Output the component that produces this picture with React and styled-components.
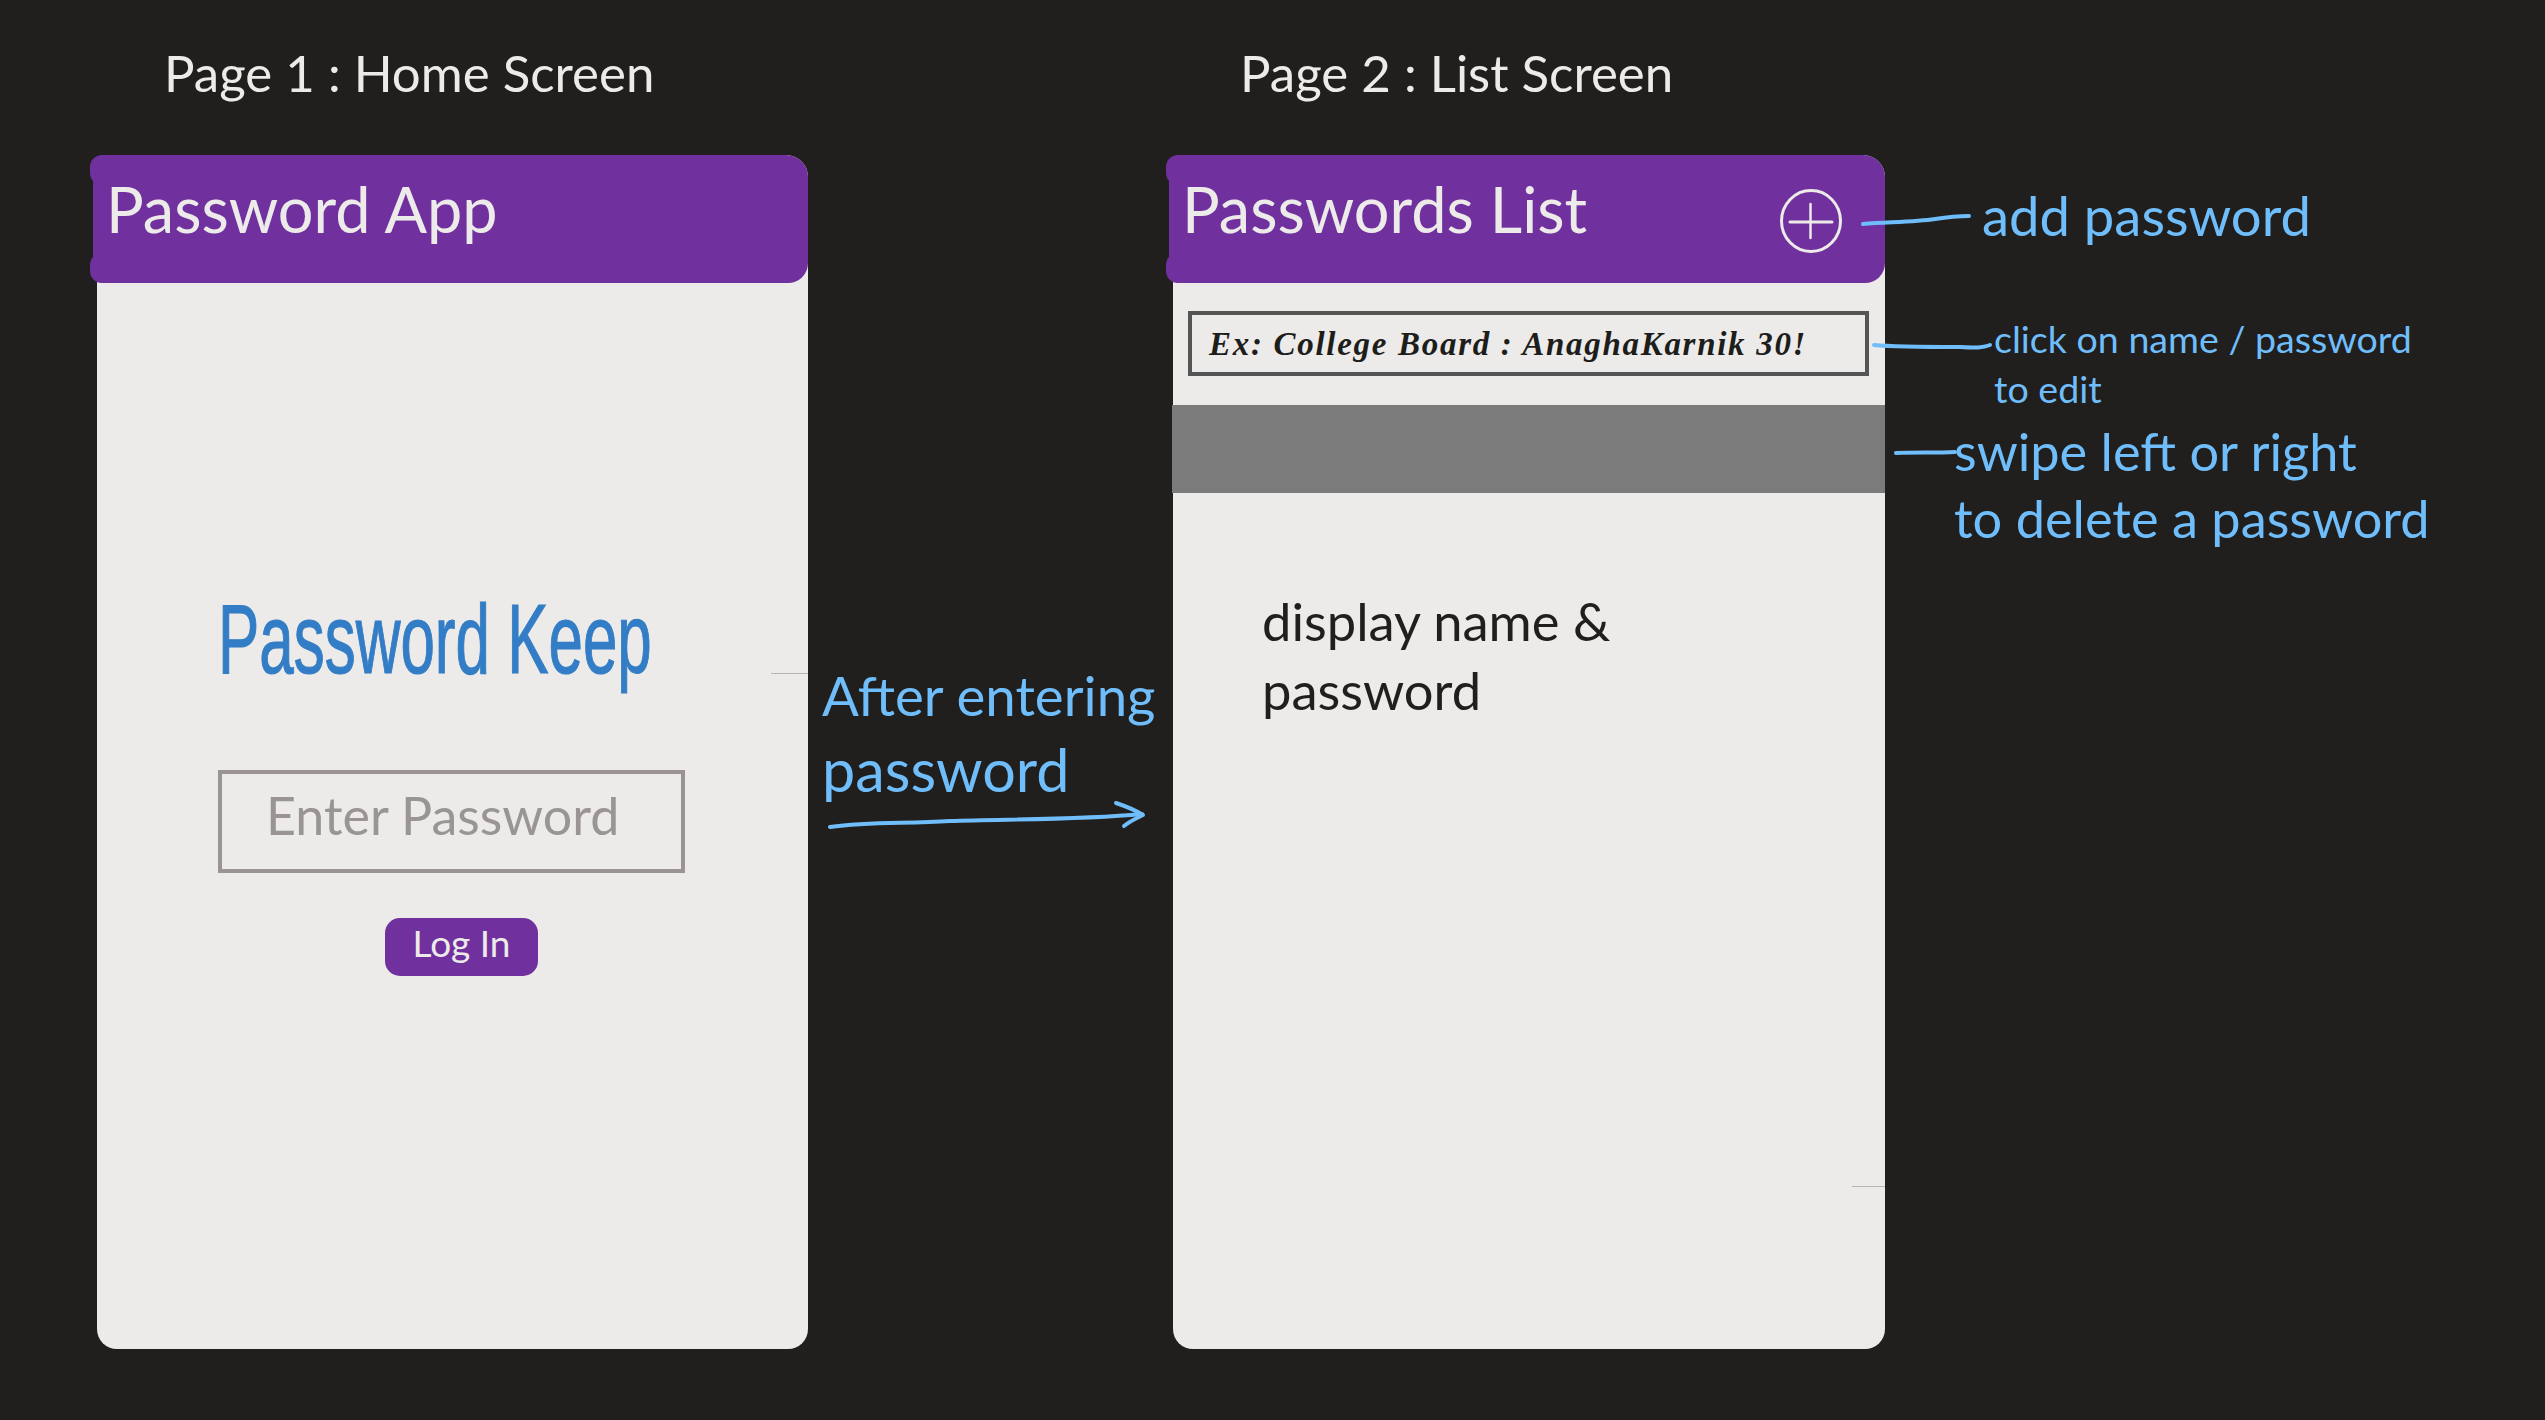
import React from "react";
import styled, { createGlobalStyle } from "styled-components";

const Global = createGlobalStyle`
  html, body { margin: 0; padding: 0; background: #201f1d; }
  body { font-family: Lato, "Open Sans", sans-serif; overflow: hidden; }
`;

const Board = styled.main`
  position: relative;
  width: 2545px;
  height: 1420px;
  background: #201f1d;
  display: flex;
  align-items: flex-start;
  gap: 365px;
  padding-left: 97px;
  box-sizing: border-box;
  overflow: hidden;
`;

const Screen = styled.section`
  width: ${(p) => p.$w}px;
  display: flex;
  flex-direction: column;
`;

const PageTitle = styled.h2`
  margin: 0;
  height: 155px;
  box-sizing: border-box;
  padding: 43px 0 0 ${(p) => p.$indent}px;
  font: 400 51px/60px Lato, sans-serif;
  color: #ecebe9;
  white-space: nowrap;
`;

const Phone = styled.div`
  position: relative;
  height: 1194px;
  background: #ecebe9;
  border-radius: 10px 22px 20px 20px;
  display: flex;
  flex-direction: column;
`;

const Header = styled.header`
  position: relative;
  margin-left: -4px;
  height: 128px;
  box-sizing: border-box;
  padding: 0 43px 0 13px;
  background: #70309e;
  border-radius: 10px 22px 20px 10px;
  display: flex;
  align-items: flex-start;
  justify-content: space-between;

  &::before,
  &::after {
    content: "";
    position: absolute;
    left: -3px;
    width: 24px;
    height: 30px;
    background: #70309e;
    border-radius: 12px;
  }
  &::before { top: 0; }
  &::after { bottom: 0; }
`;

const HeaderTitle = styled.h1`
  position: relative;
  z-index: 1;
  margin: 19px 0 0;
  font: 400 63px/70px Lato, sans-serif;
  color: #ecebe9;
  white-space: nowrap;
`;

const AddIcon = styled.svg`
  width: 62px;
  height: 64px;
  margin-top: 34px;
  flex: none;
`;

const LoginBody = styled.div`
  display: flex;
  flex-direction: column;
  padding: 296px 0 0 121px;
`;

const Brand = styled.div`
  font: 400 98px/120px "Liberation Sans", sans-serif;
  color: #337dc6;
  white-space: nowrap;
  transform: scaleX(0.632);
  transform-origin: left center;
  -webkit-text-stroke: 1.2px #337dc6;
`;

const PasswordField = styled.div`
  margin-top: 71px;
  width: 467px;
  height: 103px;
  box-sizing: border-box;
  border: 4px solid #9a9594;
  padding: 11px 0 0 44px;
  font: 400 52px/60px Lato, sans-serif;
  color: #9a9594;
  white-space: nowrap;
`;

const LogIn = styled.button`
  margin: 45px 0 0 167px;
  width: 153px;
  height: 58px;
  padding: 0 0 9px;
  border: 0;
  border-radius: 15px;
  background: #70309e;
  color: #ecebe9;
  font: 400 37px/46px Lato, sans-serif;
`;

const ListBody = styled.div`
  display: flex;
  flex-direction: column;
  padding-top: 28px;
`;

const EntryBox = styled.div`
  margin-left: 15px;
  width: 681px;
  height: 65px;
  box-sizing: border-box;
  border: 4px solid #555;
  padding: 7px 0 0 17px;
  font: italic 700 33px/44px "Liberation Serif", serif;
  letter-spacing: 1.7px;
  color: #1d1d1b;
  white-space: nowrap;
`;

const SwipeRow = styled.div`
  margin: 29px 0 0 -1px;
  height: 88px;
  background: #7b7b7b;
`;

const RowCopy = styled.p`
  margin: 93px 0 0 89px;
  font: 400 52.5px/69px Lato, sans-serif;
  color: #201f1d;
`;

const Tick = styled.i`
  position: absolute;
  right: 0;
  top: ${(p) => p.$top}px;
  width: ${(p) => p.$w}px;
  height: 1px;
  background: #b9b7b4;
`;

const Note = styled.div`
  position: absolute;
  left: ${(p) => p.$x}px;
  top: ${(p) => p.$y}px;
  font: 400 ${(p) => p.$size}px/${(p) => p.$lh}px Lato, sans-serif;
  color: #6fbdfa;
  white-space: nowrap;
`;

const Leaders = styled.svg`
  position: absolute;
  left: 0;
  top: 0;
  width: 2545px;
  height: 1420px;
  pointer-events: none;
  fill: none;
  stroke: #6fbdfa;
  stroke-width: 4;
  stroke-linecap: round;
  stroke-linejoin: round;
`;

export default function App() {
  return (
    <>
      <Global />
      <Board>
        <Screen $w={711}>
          <PageTitle $indent={67}>Page 1 : Home Screen</PageTitle>
          <Phone>
            <Header>
              <HeaderTitle>Password App</HeaderTitle>
            </Header>
            <LoginBody>
              <Brand>Password Keep</Brand>
              <PasswordField>Enter Password</PasswordField>
              <LogIn>Log In</LogIn>
            </LoginBody>
            <Tick $top={518} $w={37} />
          </Phone>
        </Screen>
        <Screen $w={712}>
          <PageTitle $indent={67}>Page 2 : List Screen</PageTitle>
          <Phone>
            <Header>
              <HeaderTitle>Passwords List</HeaderTitle>
              <AddIcon viewBox="0 0 62 64" fill="none" stroke="#ecebe9" strokeLinecap="round">
                <ellipse cx="31" cy="32" rx="29.5" ry="30.5" strokeWidth="3" />
                <path d="M10 33H52" strokeWidth="3" />
                <path d="M30.5 15V49" strokeWidth="2.5" />
              </AddIcon>
            </Header>
            <ListBody>
              <EntryBox>Ex: College Board : AnaghaKarnik 30!</EntryBox>
              <SwipeRow />
              <RowCopy>
                display name &amp;
                <br />
                password
              </RowCopy>
            </ListBody>
            <Tick $top={1031} $w={33} />
          </Phone>
        </Screen>

        <Note $x={822} $y={660} $size={54.6} $lh={70}>After entering</Note>
        <Note $x={822} $y={732} $size={59.3} $lh={74}>password</Note>
        <Note $x={1982} $y={182} $size={54.4} $lh={66}>add password</Note>
        <Note $x={1994} $y={314} $size={37.6} $lh={50}>
          click on name / password
          <br />
          to edit
        </Note>
        <Note $x={1954} $y={417} $size={52.3} $lh={67}>
          swipe left or right
          <br />
          to delete a password
        </Note>

        <Leaders viewBox="0 0 2545 1420">
          <path d="M1863 224C1890 222 1915 222 1935 219C1948 217 1958 216 1969 216" />
          <path d="M1874 345C1895 347 1925 347 1960 347C1975 348 1983 348 1990 345" />
          <path d="M1896 453C1915 452 1935 453 1955 452" />
          <path d="M830 827C870 821 905 824 950 821C1010 819 1080 820 1142 814" />
          <path d="M1116 803C1125 806 1135 810 1143 815C1137 818 1130 821 1124 826" />
        </Leaders>
      </Board>
    </>
  );
}
